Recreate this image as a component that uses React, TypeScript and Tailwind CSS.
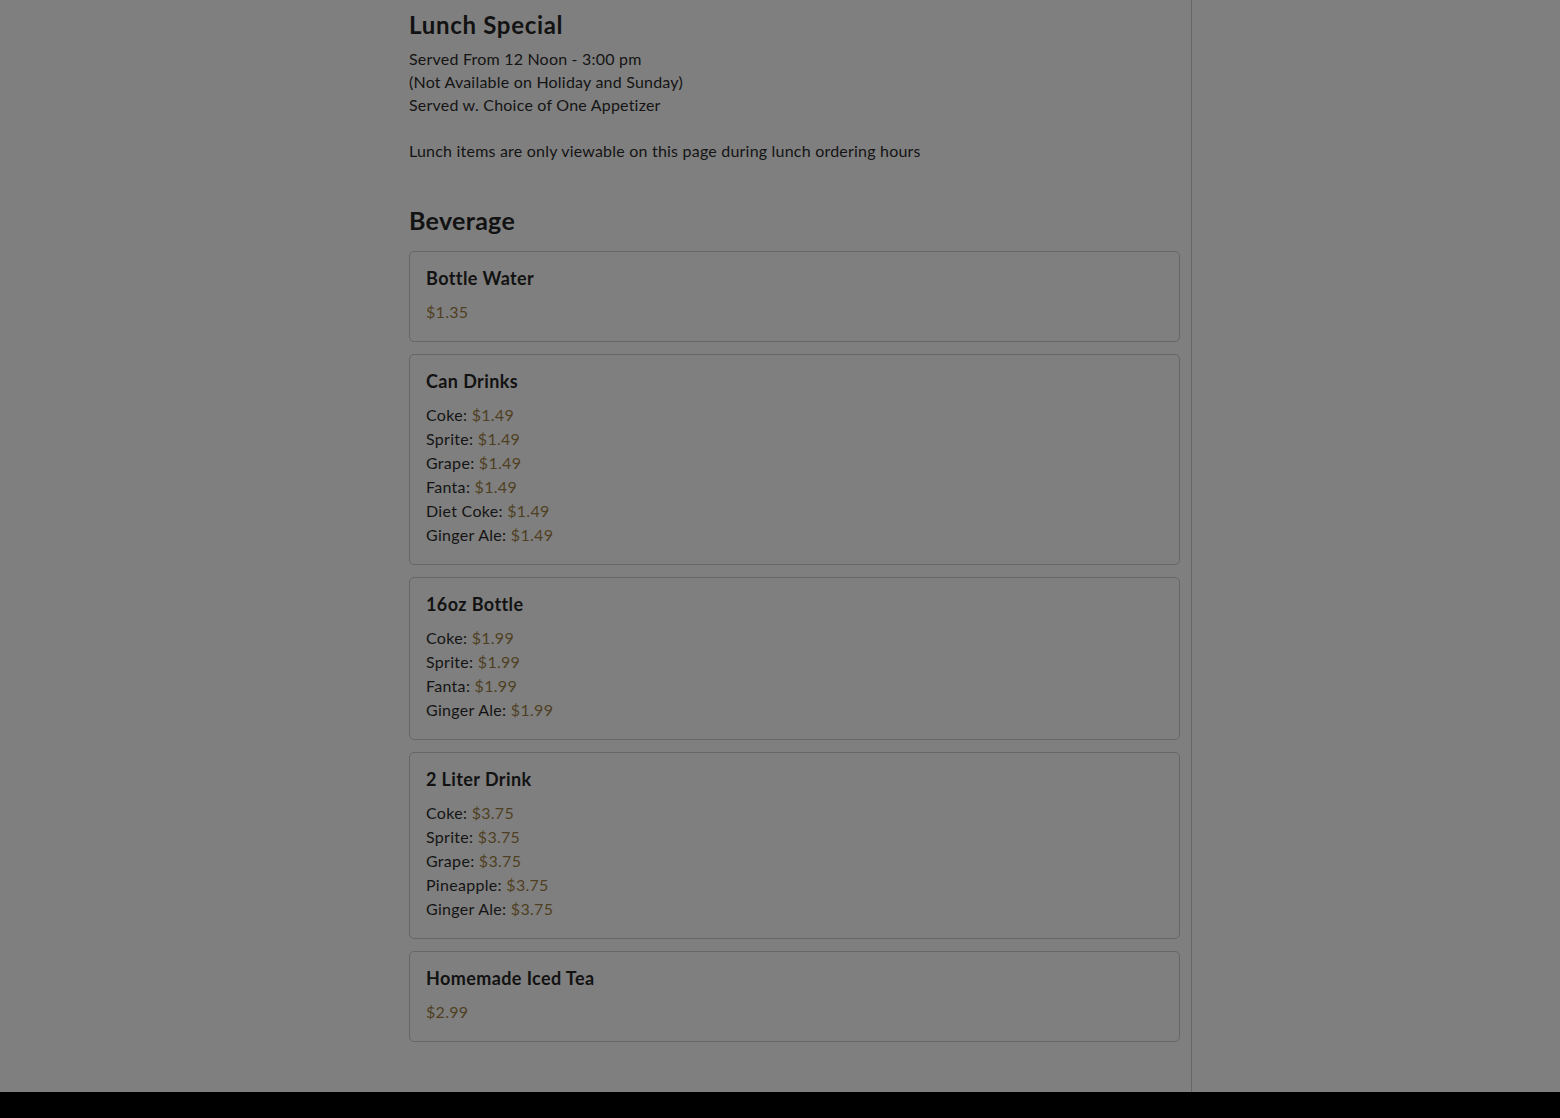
import React from "react";

type Item = { name: string; price?: string; options?: [string, string][] };

const items: Item[] = [
  { name: "Bottle Water", price: "$1.35" },
  {
    name: "Can Drinks",
    options: [
      ["Coke", "$1.49"],
      ["Sprite", "$1.49"],
      ["Grape", "$1.49"],
      ["Fanta", "$1.49"],
      ["Diet Coke", "$1.49"],
      ["Ginger Ale", "$1.49"],
    ],
  },
  {
    name: "16oz Bottle",
    options: [
      ["Coke", "$1.99"],
      ["Sprite", "$1.99"],
      ["Fanta", "$1.99"],
      ["Ginger Ale", "$1.99"],
    ],
  },
  {
    name: "2 Liter Drink",
    options: [
      ["Coke", "$3.75"],
      ["Sprite", "$3.75"],
      ["Grape", "$3.75"],
      ["Pineapple", "$3.75"],
      ["Ginger Ale", "$3.75"],
    ],
  },
  { name: "Homemade Iced Tea", price: "$2.99" },
];

export default function App() {
  return (
    <div
      className="flex h-[1118px] flex-col bg-[#7f7f7f] text-[#141414]"
      style={{ fontFamily: 'Lato, "Noto Sans", sans-serif' }}
    >
      <div className="h-[1092px] shrink-0">
        <div className="ml-[396px] h-[1092px] w-[796px] border-r border-[#666666] pl-[13px] pr-[11px] pt-[9px]">
          <h1 className="text-[24px] font-bold leading-[32px] tracking-[0.7px] text-[#121212]">
            Lunch Special
          </h1>
          <div className="mt-[6px] text-[16px] leading-[23px] tracking-[0.21px]">
            <div>Served From 12 Noon - 3:00 pm</div>
            <div>(Not Available on Holiday and Sunday)</div>
            <div>Served w. Choice of One Appetizer</div>
            <div className="h-[23px]" />
            <div>Lunch items are only viewable on this page during lunch ordering hours</div>
          </div>
          <h2 className="mt-[42px] text-[25px] font-bold leading-[32px] tracking-[0.3px] text-[#121212]">
            Beverage
          </h2>
          <div className="mt-[15px] flex flex-col gap-[12px]">
            {items.map((it) => (
              <div
                key={it.name}
                className="rounded-[5px] border border-[#666666] px-[16px] pt-[15px] pb-[17px]"
              >
                <div className="text-[18px] font-bold leading-[22px] tracking-[0.4px] text-[#121212]">
                  {it.name}
                </div>
                <div className="mt-[11px] text-[16px] leading-[24px] tracking-[0.3px]">
                  {it.price && <div className="text-[#4f3f22]">{it.price}</div>}
                  {it.options?.map(([n, p]) => (
                    <div key={n}>
                      {n}: <span className="text-[#4f3f22]">{p}</span>
                    </div>
                  ))}
                </div>
              </div>
            ))}
          </div>
        </div>
      </div>
      <div className="h-[26px] shrink-0 bg-black" />
    </div>
  );
}
